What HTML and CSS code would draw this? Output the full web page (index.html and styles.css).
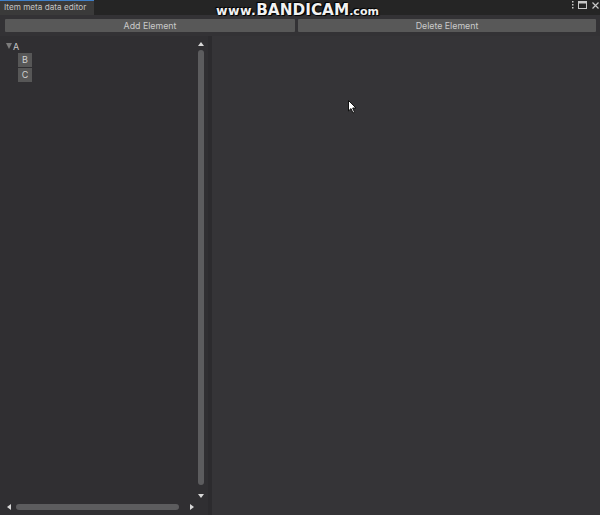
FILE: index.html
```html
<!DOCTYPE html>
<html>
<head>
<meta charset="utf-8">
<link rel="stylesheet" href="styles.css">
</head>
<body>
<div class="window">
  <div class="titlebar">
    <div class="tab">Item meta data editor</div>
    <div class="win-icons">
      <svg class="ico-menu" width="3" height="8" viewBox="0 0 3 8"><rect x="1" y="0" width="1.5" height="1.5" fill="#c8c8c8"/><rect x="1" y="3" width="1.5" height="1.5" fill="#c8c8c8"/><rect x="1" y="6" width="1.5" height="1.5" fill="#c8c8c8"/></svg>
      <svg class="ico-max" width="9" height="8" viewBox="0 0 9 8"><rect x="0.5" y="0.5" width="8" height="7" fill="none" stroke="#c8c8c8" stroke-width="1"/><rect x="0.5" y="0.5" width="8" height="2" fill="#c8c8c8"/></svg>
      <svg class="ico-close" width="7" height="7" viewBox="0 0 7 7"><path d="M0.5 0.5L6.5 6.5M6.5 0.5L0.5 6.5" stroke="#c8c8c8" stroke-width="1.2"/></svg>
    </div>
  </div>
  <div class="toolbar">
    <button class="btn btn-add">Add Element</button>
    <button class="btn btn-del">Delete Element</button>
  </div>
  <div class="main">
    <div class="left">
      <div class="left-body">
        <div class="tree">
          <div class="node">
            <span class="caret"></span><span class="node-label">A</span>
          </div>
          <div class="children">
            <div class="leaf">B</div>
            <div class="leaf">C</div>
          </div>
        </div>
        <div class="vscroll">
          <span class="arrow-up"></span>
          <div class="vthumb"></div>
          <span class="arrow-down"></span>
        </div>
      </div>
      <div class="hscroll">
        <span class="arrow-left"></span>
        <div class="hthumb"></div>
        <span class="arrow-right"></span>
        <div class="corner"></div>
      </div>
    </div>
    <div class="divider"></div>
    <div class="right"></div>
  </div>
  <div class="watermark"><span class="wm-small">www.</span><span class="wm-big">BANDICAM</span><span class="wm-com">.com</span></div>
  <svg class="cursor" width="9" height="14" viewBox="0 0 9 14"><path d="M0.5 0.5L0.5 11L3 8.6L5 13L6.6 12.3L4.7 8L8 8Z" fill="#ffffff" stroke="#111" stroke-width="1"/></svg>
</div>
</body>
</html>
```
FILE: styles.css
```css
* { box-sizing: border-box; }
html, body { margin: 0; padding: 0; }
body {
  background: #353437;
  font-family: Inter, "Noto Sans", "Liberation Sans", sans-serif;
  color: #c6c6c6;
}
.window {
  position: relative;
  width: 600px;
  height: 515px;
  overflow: hidden;
  display: flex;
  flex-direction: column;
}
.titlebar {
  height: 15px;
  background: #252525;
  display: flex;
  align-items: stretch;
}
.tab {
  width: 94px;
  background: #3a3a3a;
  border-top: 1px solid #3f7fc7;
  font-size: 8.2px;
  line-height: 13px;
  padding-left: 4px;
  color: #c4c4c4;
  white-space: nowrap;
}
.win-icons {
  margin-left: auto;
  display: flex;
  align-items: center;
  gap: 5px;
  padding-right: 1px;
  padding-bottom: 5px;
}
.ico-menu { margin-right: -1px; }
.toolbar {
  height: 21px;
  background: #333235;
  display: flex;
  gap: 3px;
  padding: 4px 4px 0 5px;
}
.btn {
  height: 13px;
  border: 0;
  border-radius: 1px;
  background: #585858;
  color: #cacaca;
  font-family: Inter, "Noto Sans", "Liberation Sans", sans-serif;
  font-size: 8.8px;
  line-height: 13px;
  padding: 0;
}
.btn-add { width: 290px; }
.btn-del { flex: 1; }
.main {
  flex: 1;
  display: flex;
  min-height: 0;
}
.left {
  width: 208px;
  background: #302f32;
  display: flex;
  flex-direction: column;
}
.left-body {
  flex: 1;
  display: flex;
  min-height: 0;
}
.tree {
  flex: 1;
  padding: 5px 0 0 6px;
}
.node {
  display: flex;
  align-items: center;
  height: 10px;
}
.caret {
  width: 0;
  height: 0;
  border-left: 3.5px solid transparent;
  border-right: 3.5px solid transparent;
  border-top: 6px solid #7c7c7c;
  margin-right: 1px;
}
.node-label {
  font-size: 9px;
  color: #c8c8c8;
}
.children {
  padding: 2px 0 0 12px;
  display: flex;
  flex-direction: column;
  gap: 1px;
}
.leaf {
  width: 14px;
  height: 14px;
  background: #575757;
  color: #d0d0d0;
  font-size: 9px;
  line-height: 14px;
  text-align: center;
}
.vscroll {
  width: 12px;
  margin-right: 1px;
  display: flex;
  flex-direction: column;
  align-items: center;
  padding: 6px 0 2px;
}
.arrow-up, .arrow-down {
  width: 0;
  height: 0;
  border-left: 3px solid transparent;
  border-right: 3px solid transparent;
}
.arrow-up { border-bottom: 4px solid #d8d8d8; }
.arrow-down { border-top: 4px solid #d8d8d8; }
.vthumb {
  flex: 1;
  width: 6px;
  margin: 4px 0 9px;
  background: #5c5c5e;
  border-radius: 3px;
}
.hscroll {
  height: 15px;
  display: flex;
  align-items: center;
  padding: 0 0 2px 7px;
}
.arrow-left, .arrow-right {
  width: 0;
  height: 0;
  border-top: 3px solid transparent;
  border-bottom: 3px solid transparent;
}
.arrow-left { border-right: 4px solid #d8d8d8; }
.arrow-right { border-left: 4px solid #d8d8d8; }
.hthumb {
  width: 163px;
  height: 6px;
  margin: 0 11px 0 5px;
  background: #5c5c5e;
  border-radius: 3px;
}
.corner { flex: 1; }
.divider {
  width: 4px;
  background: #2c2b2e;
}
.right {
  flex: 1;
  background: #353437;
}
.watermark {
  position: absolute;
  left: 216px;
  top: 2px;
  font-family: "DejaVu Sans", sans-serif;
  font-weight: bold;
  color: #f2f2f2;
  white-space: nowrap;
  text-shadow: 0 0 1px #000, 1px 1px 1px #000, -1px -1px 1px #000;
  line-height: 16px;
}
.wm-small { font-size: 12.5px; letter-spacing: 0.4px; }
.wm-big { font-size: 15.3px; }
.wm-com { font-size: 11px; }
.cursor {
  position: absolute;
  left: 348px;
  top: 100px;
}
```
